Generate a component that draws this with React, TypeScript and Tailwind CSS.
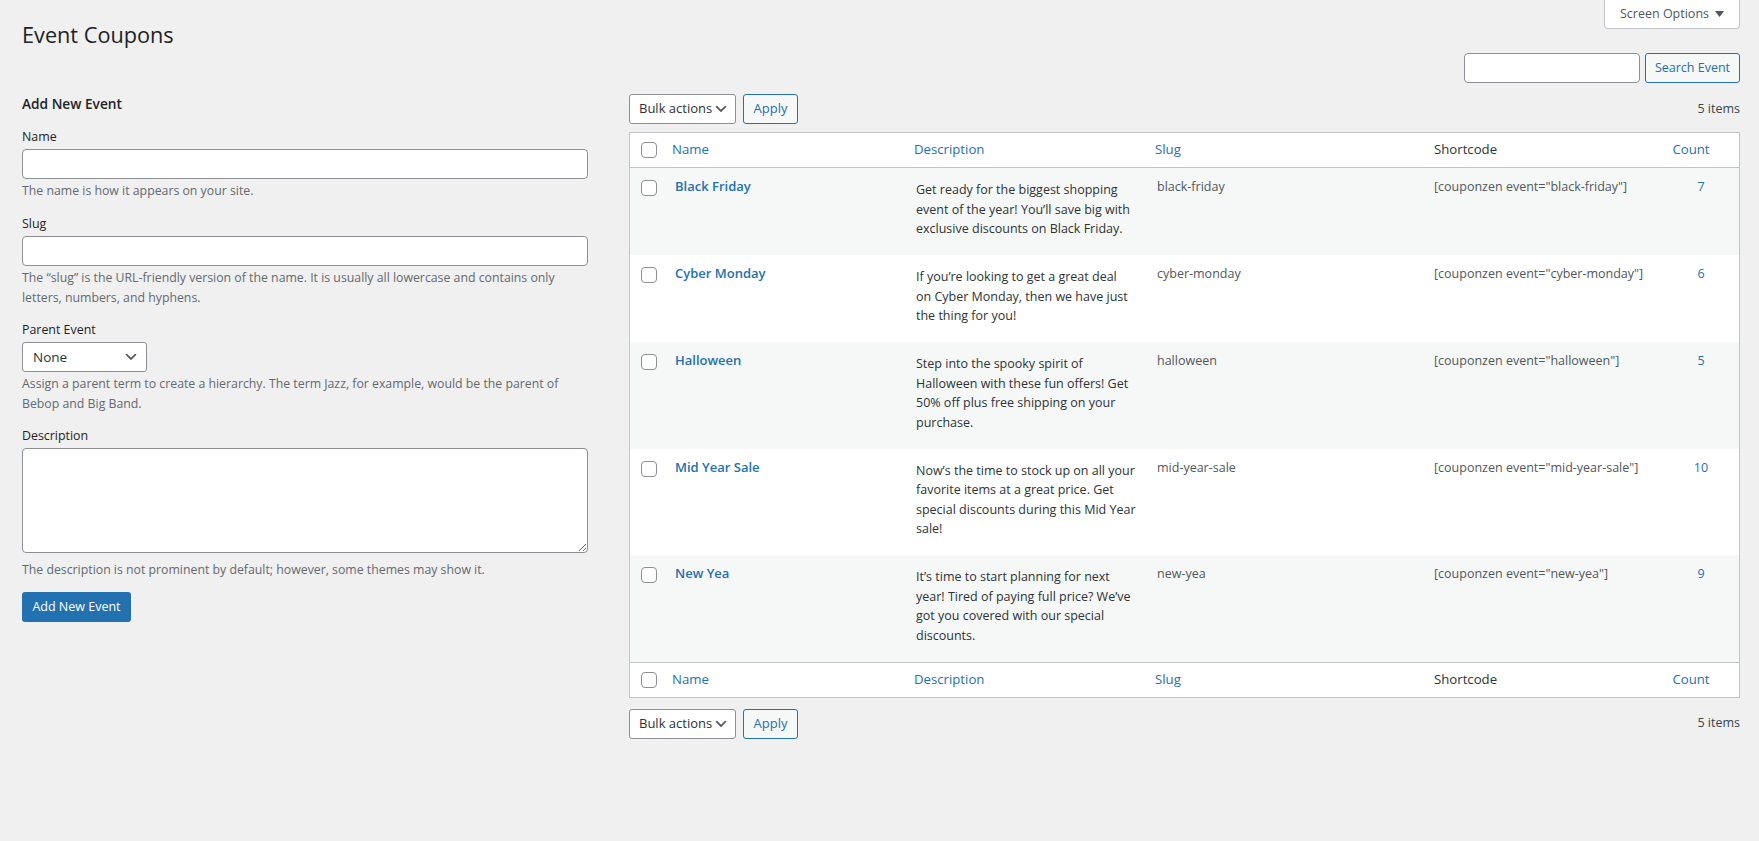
import React from "react";

interface EventRow {
  name: string;
  desc: string[];
  slug: string;
  count: number;
}

const rows: EventRow[] = [
  {
    name: "Black Friday",
    desc: [
      "Get ready for the biggest shopping",
      "event of the year! You’ll save big with",
      "exclusive discounts on Black Friday.",
    ],
    slug: "black-friday",
    count: 7,
  },
  {
    name: "Cyber Monday",
    desc: [
      "If you’re looking to get a great deal",
      "on Cyber Monday, then we have just",
      "the thing for you!",
    ],
    slug: "cyber-monday",
    count: 6,
  },
  {
    name: "Halloween",
    desc: [
      "Step into the spooky spirit of",
      "Halloween with these fun offers! Get",
      "50% off plus free shipping on your",
      "purchase.",
    ],
    slug: "halloween",
    count: 5,
  },
  {
    name: "Mid Year Sale",
    desc: [
      "Now’s the time to stock up on all your",
      "favorite items at a great price. Get",
      "special discounts during this Mid Year",
      "sale!",
    ],
    slug: "mid-year-sale",
    count: 10,
  },
  {
    name: "New Yea",
    desc: [
      "It’s time to start planning for next",
      "year! Tired of paying full price? We’ve",
      "got you covered with our special",
      "discounts.",
    ],
    slug: "new-yea",
    count: 9,
  },
];

const Chevron = () => (
  <svg width="16" height="16" viewBox="0 0 20 20" className="shrink-0">
    <path d="M5 6l5 5 5-5 2 1-7 7-7-7 2-1z" fill="#555" />
  </svg>
);

const CheckBox = () => (
  <span className="block w-4 h-4 rounded-[4px] border border-[#8c8f94] bg-white" />
);

const BulkBar = () => (
  <div className="flex items-center h-[30px]">
    <div className="flex items-center justify-between w-[107px] h-[30px] pl-[9px] pr-[6px] bg-white border border-[#8c8f94] rounded-[3px] text-[13px] text-[#2c3338]">
      <span>Bulk actions</span>
      <Chevron />
    </div>
    <div className="ml-[7px] flex items-center justify-center w-[55px] h-[30px] bg-[#f6f7f7] border border-[#2271b1] rounded-[3px] text-[13px] text-[#2271b1]">
      Apply
    </div>
    <div className="ml-auto text-[12.5px] text-[#3c434a]">5 items</div>
  </div>
);

const cols = "grid grid-cols-[32px_242px_241px_279px_239px_1fr]";

const HeadRow = ({ top }: { top: boolean }) => (
  <div
    className={`${cols} h-[35px] items-center text-[13.2px] ${
      top ? "border-b border-[#c3c4c7]" : "border-t border-[#c3c4c7]"
    }`}
  >
    <div className="pl-[11px]">
      <CheckBox />
    </div>
    <div className="pl-[10px] text-[#2271b1]">Name</div>
    <div className="pl-[10px] text-[#2271b1]">Description</div>
    <div className="pl-[10px] text-[#2271b1]">Slug</div>
    <div className="pl-[10px] text-[#2c3338]">Shortcode</div>
    <div className="pr-[20px] text-center text-[#2271b1]">Count</div>
  </div>
);

const Field = ({ label, children }: { label: string; children: React.ReactNode }) => (
  <div className="flex flex-col">
    <div className="text-[12.4px] leading-[20px] text-[#1d2327]">{label}</div>
    <div className="mt-[2px]">{children}</div>
  </div>
);

const Help = ({ lines, className = "" }: { lines: string[]; className?: string }) => (
  <div className={`text-[12.3px] leading-[20px] text-[#646970] whitespace-nowrap ${className}`}>
    {lines.map((l) => (
      <div key={l}>{l}</div>
    ))}
  </div>
);

export default function App() {
  return (
    <div className="min-h-screen w-full bg-[#f0f0f1] pl-[22px] pr-[19px] font-['Open_Sans',sans-serif] text-[#3c434a]">
      <div className="flex items-start justify-between h-[50px]">
        <h1 className="pt-[20px] text-[21.7px] leading-[30px] font-normal text-[#1d2327]">Event Coupons</h1>
        <div className="flex items-center justify-center gap-[6px] w-[136px] h-[29px] bg-white border border-t-0 border-[#c3c4c7] rounded-b-[4px] text-[12.5px] text-[#50575e]">
          <span>Screen Options</span>
          <svg width="9" height="6" viewBox="0 0 9 6">
            <path d="M0 0h9L4.5 6z" fill="#50575e" />
          </svg>
        </div>
      </div>

      <div className="mt-[3px] flex justify-end h-[30px]">
        <div className="w-[176px] h-[30px] bg-white border border-[#8c8f94] rounded-[4px]" />
        <div className="ml-[5px] flex items-center justify-center w-[95px] h-[30px] bg-[#f6f7f7] border border-[#2271b1] rounded-[3px] text-[12.5px] text-[#2271b1]">
          Search Event
        </div>
      </div>

      <div className="mt-[11px] flex gap-[41px] items-start">
        {/* add form */}
        <div className="w-[566px] shrink-0 flex flex-col">
          <h2 className="text-[13.7px] leading-[20px] font-semibold text-[#1d2327]">Add New Event</h2>

          <div className="mt-[13px]">
            <Field label="Name">
              <div className="h-[30px] bg-white border border-[#8c8f94] rounded-[4px]" />
            </Field>
            <Help className="mt-[2px]" lines={["The name is how it appears on your site."]} />
          </div>

          <div className="mt-[13px]">
            <Field label="Slug">
              <div className="h-[30px] bg-white border border-[#8c8f94] rounded-[4px]" />
            </Field>
            <Help
              className="mt-[2px]"
              lines={[
                "The “slug” is the URL-friendly version of the name. It is usually all lowercase and contains only",
                "letters, numbers, and hyphens.",
              ]}
            />
          </div>

          <div className="mt-[12px]">
            <Field label="Parent Event">
              <div className="flex items-center justify-between w-[125px] h-[30px] pl-[10px] pr-[7px] bg-white border border-[#8c8f94] rounded-[3px] text-[13.5px] text-[#2c3338]">
                <span>None</span>
                <Chevron />
              </div>
            </Field>
            <Help
              className="mt-[2px]"
              lines={[
                "Assign a parent term to create a hierarchy. The term Jazz, for example, would be the parent of",
                "Bebop and Big Band.",
              ]}
            />
          </div>

          <div className="mt-[12px]">
            <Field label="Description">
              <textarea className="block w-full h-[105px] bg-white border border-[#8c8f94] rounded-[4px] outline-none" />
            </Field>
            <Help
              className="mt-[7px]"
              lines={["The description is not prominent by default; however, some themes may show it."]}
            />
          </div>

          <div className="mt-[12px] flex items-center justify-center w-[109px] h-[30px] bg-[#2271b1] rounded-[3px] text-[12.5px] text-white">
            Add New Event
          </div>
        </div>

        {/* list table */}
        <div className="flex-1 flex flex-col">
          <BulkBar />
          <div className="mt-[8px] bg-white border border-[#c3c4c7]">
            <HeadRow top />
            {rows.map((r, i) => (
              <div
                key={r.slug}
                className={`${cols} items-start text-[12.5px] leading-[19.5px] ${
                  i % 2 === 0 ? "bg-[#f6f7f7]" : "bg-white"
                }`}
              >
                <div className="pl-[11px] pt-[12px]">
                  <CheckBox />
                </div>
                <div className="pl-[13px] pt-[9px] text-[13px] font-semibold text-[#2271b1]">{r.name}</div>
                <div className="pl-[12px] pt-[12px] pb-[16.5px] text-[#2c3338] whitespace-nowrap">
                  {r.desc.map((l) => (
                    <div key={l}>{l}</div>
                  ))}
                </div>
                <div className="pl-[12px] pt-[9px] text-[#50575e]">{r.slug}</div>
                <div className="pl-[10px] pt-[9px] text-[#50575e]">[couponzen event="{r.slug}"]</div>
                <div className="pt-[9px] text-center text-[#2271b1]">{r.count}</div>
              </div>
            ))}
            <HeadRow top={false} />
          </div>
          <div className="mt-[11px]">
            <BulkBar />
          </div>
        </div>
      </div>
    </div>
  );
}
